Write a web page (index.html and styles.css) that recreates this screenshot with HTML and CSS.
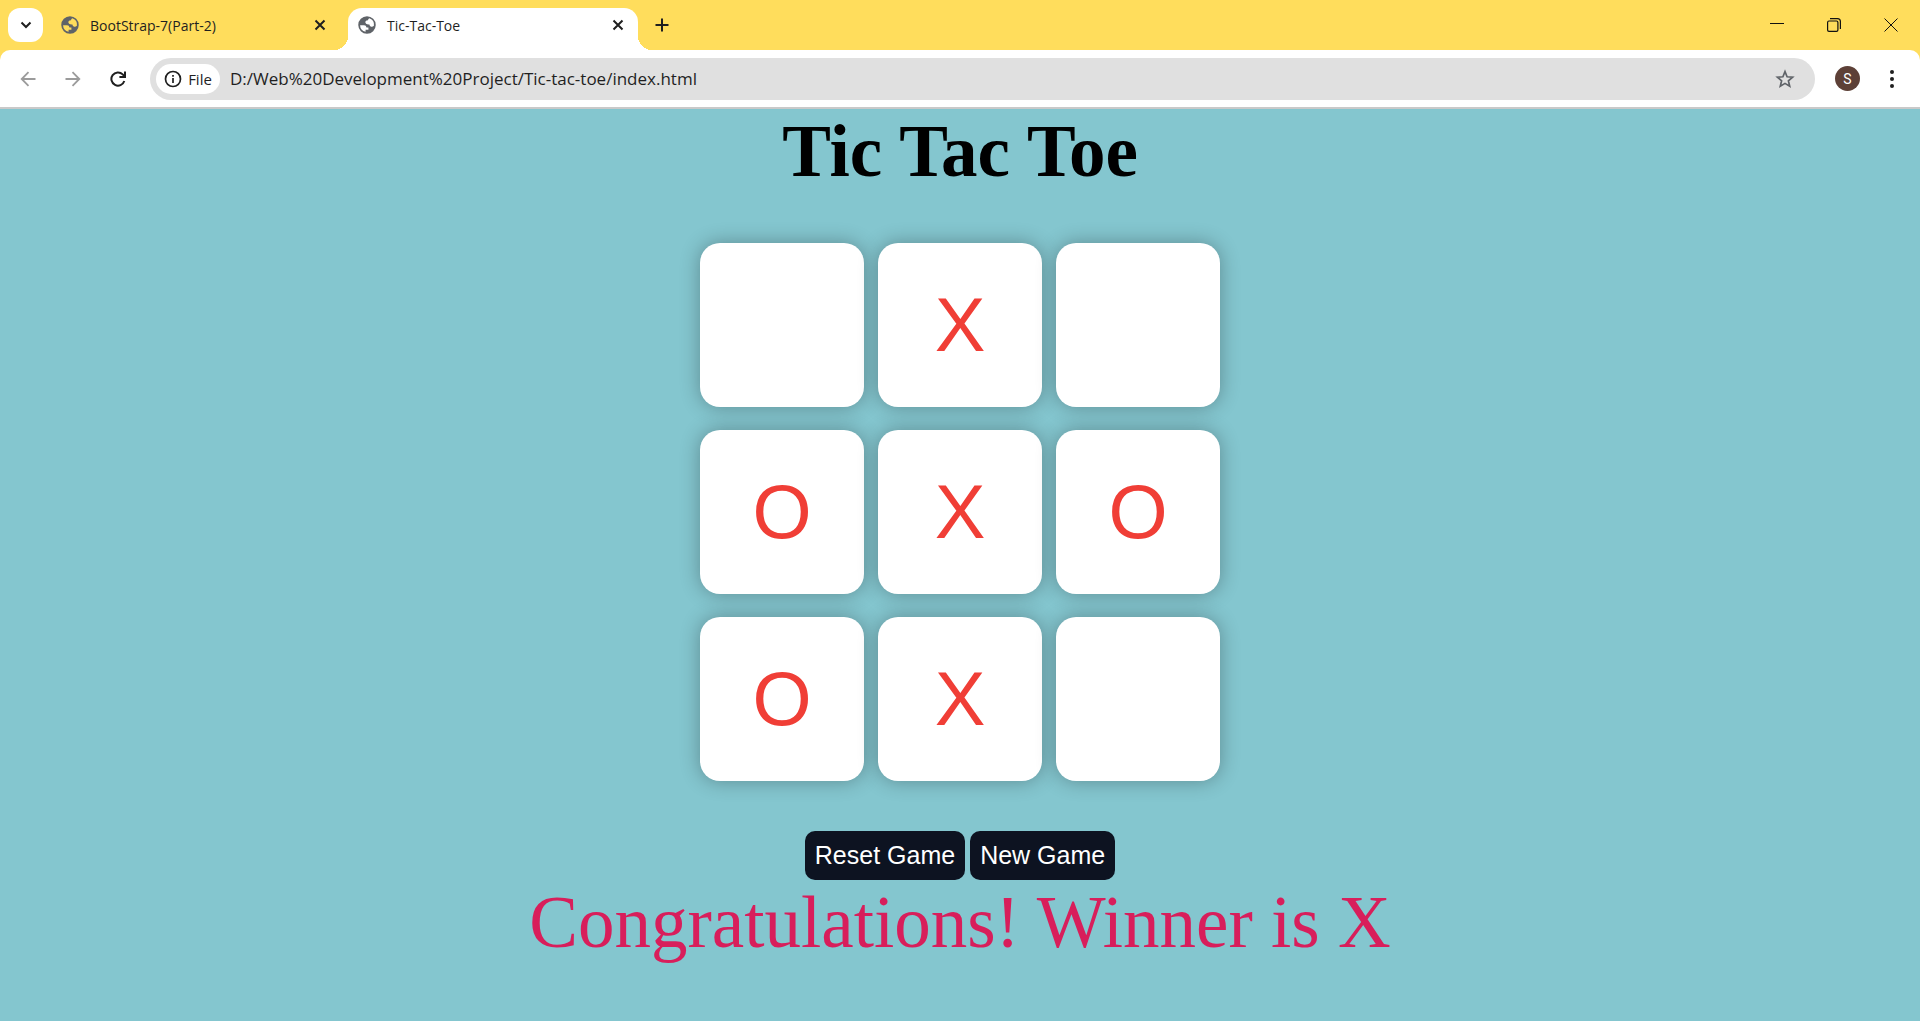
FILE: index.html
```html
<!DOCTYPE html>
<html lang="en">
<head>
  <meta charset="utf-8">
  <meta name="viewport" content="width=device-width, initial-scale=1">
  <title>Tic-Tac-Toe</title>
  <link rel="stylesheet" href="styles.css">
</head>
<body>
  <svg class="defs" aria-hidden="true">
    <symbol id="globe" viewBox="0 0 24 24">
      <path fill="currentColor" d="M12 1.500a10.500 10.500 0 1 0 0 21 10.500 10.500 0 0 0 0-21zM3.700 12.300H8.500q2.600 0 2.900 2.700h2.300v2.800h-3.400v2.400A8.400 8.400 0 0 1 3.700 12.300zM20.300 12.900q-1.400 1.500-3.300 1.100-1.900-.4-2.100-2.600-2.600 .2-4-.9-1.500-1.300-.6-3 .8-1.300 2.900-1.300 .1-1.700 1.700-2.200a8.400 8.400 0 0 1 5.400 8.900z" fill-rule="evenodd"/>
    </symbol>
    <symbol id="cross" viewBox="0 0 12 12">
      <path fill="none" stroke="currentColor" stroke-width="2" d="M1.500 1.500l9 9m0-9l-9 9"/>
    </symbol>
  </svg>

  <header class="browser">
    <div class="tab-bar">
      <button class="tab-search" aria-label="Search tabs">
        <svg width="12" height="8" viewBox="0 0 12 8"><path fill="none" stroke="currentColor" stroke-width="2" d="M1.500 1.500L6 6l4.500-4.500"/></svg>
      </button>
      <div class="tab">
        <svg class="favicon"><use href="#globe"/></svg>
        <span class="tab-title">BootStrap-7(Part-2)</span>
        <button class="tab-close" aria-label="Close tab"><svg width="12" height="12"><use href="#cross"/></svg></button>
      </div>
      <div class="tab tab-active">
        <svg class="favicon"><use href="#globe"/></svg>
        <span class="tab-title">Tic-Tac-Toe</span>
        <button class="tab-close" aria-label="Close tab"><svg width="12" height="12"><use href="#cross"/></svg></button>
      </div>
      <button class="new-tab" aria-label="New tab">
        <svg width="14" height="14" viewBox="0 0 14 14"><path stroke="currentColor" stroke-width="2" d="M7 .5v13M.5 7h13"/></svg>
      </button>
      <div class="window-controls">
        <button aria-label="Minimize"><svg width="14" height="14" viewBox="0 0 14 14"><path stroke="currentColor" d="M0 5.500h14"/></svg></button>
        <button aria-label="Restore"><svg width="14" height="14" viewBox="0 0 14 14"><path fill="none" stroke="currentColor" stroke-width="1.200" d="M1.500 3h8q1.400 0 1.400 1.400v7.600q0 1.400-1.400 1.400H2q-1.400 0-1.400-1.400V4.400Q.6 3 2 3zM3 .6h7.500q2.900 0 2.900 2.900V11"/></svg></button>
        <button aria-label="Close"><svg width="14" height="14" viewBox="0 0 14 14"><path stroke="currentColor" d="M.5 .5l13 13m0-13l-13 13"/></svg></button>
      </div>
    </div>

    <div class="toolbar">
      <nav class="history">
        <button class="muted" aria-label="Back"><svg width="16" height="16" viewBox="0 0 16 16"><path fill="none" stroke="currentColor" stroke-width="1.800" d="M15.500 8H1.800M8.500 1.200L1.700 8l6.800 6.800"/></svg></button>
        <button class="muted" aria-label="Forward"><svg width="16" height="16" viewBox="0 0 16 16"><path fill="none" stroke="currentColor" stroke-width="1.800" d="M.5 8h13.700M7.500 1.200L14.300 8l-6.800 6.800"/></svg></button>
        <button aria-label="Reload"><svg width="16" height="16" viewBox="0 0 16 16"><path fill="none" stroke="currentColor" stroke-width="2" d="M14.300 10A6.600 6.600 0 1 1 12.700 3.400L14.500 5.200M15 .5v5.600H9.400"/></svg></button>
      </nav>
      <div class="omnibox">
        <button class="chip">
          <svg width="18" height="18" viewBox="0 0 18 18"><circle cx="9" cy="9" r="7.500" fill="none" stroke="currentColor" stroke-width="1.700"/><path stroke="currentColor" stroke-width="1.700" d="M9 8v5M9 5v1.700"/></svg>
          File
        </button>
        <input class="url" type="text" aria-label="Address" value="D:/Web%20Development%20Project/Tic-tac-toe/index.html">
        <button class="star" aria-label="Bookmark this page">
          <svg width="20" height="20" viewBox="0 0 20 20"><path fill="none" stroke="currentColor" stroke-width="1.700" d="M10 2.600l2.100 5.200 5.500 .4-4.200 3.600 1.300 5.500L10 14.400l-4.700 2.900 1.300-5.500L2.400 8.200l5.500-.4z"/></svg>
        </button>
      </div>
      <button class="avatar" aria-label="Profile">S</button>
      <button class="menu" aria-label="Menu">
        <svg width="6" height="20" viewBox="0 0 6 20"><g fill="currentColor"><circle cx="3" cy="3" r="2"/><circle cx="3" cy="10" r="2"/><circle cx="3" cy="17" r="2"/></g></svg>
      </button>
    </div>
  </header>

  <main class="game">
    <h1 class="title">Tic Tac Toe</h1>
    <div class="board">
      <button class="cell" aria-label="Empty"></button>
      <button class="cell">X</button>
      <button class="cell" aria-label="Empty"></button>
      <button class="cell">O</button>
      <button class="cell">X</button>
      <button class="cell">O</button>
      <button class="cell">O</button>
      <button class="cell">X</button>
      <button class="cell" aria-label="Empty"></button>
    </div>
    <div class="actions">
      <button class="action">Reset Game</button>
      <button class="action">New Game</button>
    </div>
    <p class="message">Congratulations! Winner is X</p>
  </main>
</body>
</html>
```
FILE: styles.css
```css
* {
  box-sizing: border-box;
}

body {
  margin: 0;
  min-height: 100vh;
  display: flex;
  flex-direction: column;
  background: #84c6cf;
}

button {
  display: flex;
  align-items: center;
  justify-content: center;
  padding: 0;
  border: 0;
  background: none;
  color: inherit;
  font: inherit;
}

.defs {
  display: none;
}

/* Browser frame */
.browser {
  background: #ffdd5c;
  color: #1f1f1f;
  font-family: "Open Sans", "Noto Sans", sans-serif;
}

.tab-bar {
  display: flex;
  align-items: center;
  height: 50px;
  padding-left: 8px;
}

.tab-search {
  width: 35px;
  height: 34px;
  margin-right: 8px;
  border-radius: 12px;
  background: #fff;
}

.tab {
  position: relative;
  display: flex;
  align-items: center;
  align-self: flex-end;
  width: 297px;
  height: 42px;
  padding: 0 22px 8px 9px;
  font-size: 14px;
}

.tab-active {
  width: 290px;
  padding-right: 14px;
  border-radius: 14px 14px 0 0;
  background: #fff;
}

.tab-active::before,
.tab-active::after {
  content: "";
  position: absolute;
  bottom: 0;
  width: 14px;
  height: 14px;
}

.tab-active::before {
  right: 100%;
  background: radial-gradient(circle at 0 0, transparent 14px, #fff 14px);
}

.tab-active::after {
  left: 100%;
  background: radial-gradient(circle at 100% 0, transparent 14px, #fff 14px);
}

.favicon {
  width: 20px;
  height: 20px;
  margin-right: 10px;
  color: #5f6368;
}

.tab-title {
  flex: 1;
}

.new-tab {
  width: 32px;
  height: 32px;
  margin-left: 8px;
}

.window-controls {
  display: flex;
  margin-left: auto;
  padding-right: 1px;
}

.window-controls button {
  width: 57px;
  height: 50px;
  color: #111;
}

.toolbar {
  display: flex;
  align-items: center;
  height: 59px;
  padding: 0 16px 0 10px;
  border-bottom: 2px solid #c9c9c9;
  border-radius: 10px 10px 0 0;
  background: #fff;
}

.history {
  display: flex;
  gap: 9px;
  margin-right: 14px;
}

.history button {
  width: 36px;
  height: 36px;
}

.history .muted {
  color: #9b9b9b;
}

.omnibox {
  flex: 1;
  display: flex;
  align-items: center;
  height: 42px;
  padding: 0 20px 0 6px;
  border-radius: 21px;
  background: #e0e0e0;
}

.chip {
  gap: 6px;
  width: 64px;
  height: 30px;
  border-radius: 15px;
  background: #fff;
  font-size: 15px;
}

.url {
  flex: 1;
  min-width: 0;
  margin-left: 10px;
  padding: 0;
  border: 0;
  background: none;
  color: #1f1f1f;
  font: 17px/24px "Open Sans", "Noto Sans", sans-serif;
}

.star {
  color: #5f6368;
}

.avatar {
  width: 25px;
  height: 25px;
  margin: 0 20px;
  border-radius: 50%;
  background: #5d4037;
  color: #fff;
  font: 14px/16px Roboto, sans-serif;
}

.menu {
  width: 24px;
  height: 36px;
}

/* Game page */
.game {
  flex: 1;
  display: flex;
  flex-direction: column;
  align-items: center;
  color: #000;
  font-family: "Liberation Serif", "Times New Roman", serif;
}

.title {
  margin: 0 0 48px;
  font-size: 73px;
  line-height: 86px;
}

.board {
  display: grid;
  grid-template-columns: repeat(3, 164px);
  gap: 23px 14px;
}

.cell {
  height: 164px;
  border-radius: 20px;
  background: #fff;
  box-shadow: 0 0 20px rgba(0, 0, 0, 0.3);
  color: #f03e36;
  font: 76px/86px "Liberation Sans", Arial, sans-serif;
}

.actions {
  display: flex;
  gap: 5px;
  margin-top: 50px;
}

.action {
  padding: 10px;
  border-radius: 10px;
  background: #0d1321;
  color: #fff;
  font: 25px/29px "Liberation Sans", Arial, sans-serif;
}

.message {
  margin: 0;
  color: #d81e5b;
  font-size: 73px;
  line-height: 86px;
}
```
